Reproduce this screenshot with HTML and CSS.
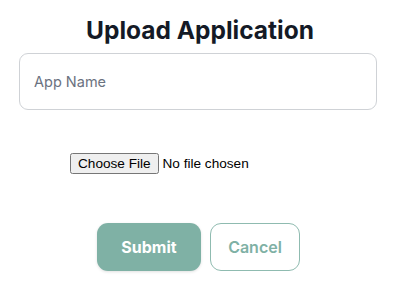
FILE: index.html
```html
<!DOCTYPE html>
<html>
<head>
<meta charset="utf-8">
<link rel="stylesheet" href="styles.css">
</head>
<body>
<div class="modal">
  <h2 class="title">Upload Application</h2>
  <form class="form">
    <input class="name-input" type="text" placeholder="App Name">
    <div class="file-row">
      <input class="file-input" type="file">
    </div>
    <div class="actions">
      <button type="button" class="btn btn-primary">Submit</button>
      <button type="button" class="btn btn-outline">Cancel</button>
    </div>
  </form>
</div>
</body>
</html>
```
FILE: styles.css
```css
html, body {
  margin: 0;
  padding: 0;
  background: #ffffff;
}
.modal {
  width: 400px;
  height: 288px;
  box-sizing: border-box;
  padding: 14px 0 0 0;
  font-family: Inter, "Noto Sans", sans-serif;
}
.title {
  margin: 0;
  text-align: center;
  font-size: 24.5px;
  line-height: 32px;
  font-weight: 700;
  color: #141a26;
  letter-spacing: 0;
}
.form {
  display: flex;
  flex-direction: column;
  margin-top: 7px;
}
.name-input {
  margin: 0 23px 0 19px;
  height: 57px;
  box-sizing: border-box;
  border: 1px solid #cfd2d6;
  border-radius: 9px;
  padding: 0 14px;
  font-family: Inter, sans-serif;
  font-size: 14.5px;
  color: #111827;
  outline: none;
}
.name-input::placeholder {
  color: #6b7280;
}
.file-row {
  padding: 42px 0 0 70px;
}
.file-input {
  font-family: "Liberation Sans", Arial, sans-serif;
  font-size: 13.6px;
  color: #000;
}
.actions {
  display: flex;
  justify-content: center;
  gap: 9px;
  margin-top: 49px;
  padding-right: 3px;
}
.btn {
  height: 48px;
  box-sizing: border-box;
  border-radius: 11px;
  font-family: Inter, sans-serif;
  font-size: 16px;
  font-weight: 700;
  cursor: pointer;
}
.btn-primary {
  width: 104px;
  background: #7fb1a5;
  color: #ffffff;
  border: none;
  box-shadow: 0 1px 3px rgba(0,0,0,0.12);
}
.btn-outline {
  width: 90px;
  background: #ffffff;
  color: #7fb1a5;
  border: 1px solid #8fbbb0;
  font-weight: 600;
}
```
